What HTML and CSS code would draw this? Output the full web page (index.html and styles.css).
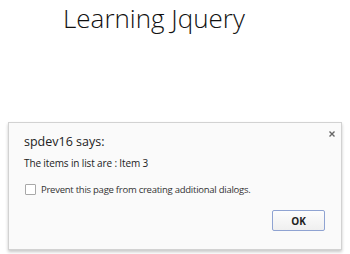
FILE: index.html
```html
<!DOCTYPE html>
<html>
<head>
<meta charset="utf-8">
<link rel="stylesheet" href="styles.css">
</head>
<body>
<h1 class="title">Learning Jquery</h1>
<div class="dialog">
  <svg class="close" width="6" height="6" viewBox="0 0 6 6"><path d="M0.5 0.5L5.5 5.5M5.5 0.5L0.5 5.5" stroke="#666" stroke-width="1.4"/></svg>
  <div class="heading">spdev16 says:</div>
  <div class="message">The items in list are : Item 3</div>
  <label class="prevent"><span class="box"></span>Prevent this page from creating additional dialogs.</label>
  <div class="actions"><button class="ok">OK</button></div>
</div>
</body>
</html>
```
FILE: styles.css
```css
html, body { margin: 0; padding: 0; background: #fff; }
body { width: 350px; height: 254px; overflow: hidden; font-family: "Open Sans", "Liberation Sans", sans-serif; }
.title {
  margin: 0;
  padding: 2px 0 0 63px;
  font-weight: 300;
  font-size: 26px;
  line-height: 32px;
  color: #111;
}
.dialog {
  position: absolute;
  left: 8px; top: 122px;
  width: 334px; height: 128px;
  box-sizing: border-box;
  background: #fafafa;
  border: 1px solid #d2d2d2;
  box-shadow: 0 2px 3px rgba(0,0,0,0.22);
  display: flex; flex-direction: column;
  padding: 0 16px 0 15px;
}
.close { position: absolute; right: 6px; top: 8px; }
.heading { margin-top: 11px; font-size: 12.5px; line-height: 16px; color: #222; }
.message { margin-top: 7px; font-size: 10px; line-height: 12px; letter-spacing: -0.13px; color: #222; }
.prevent { margin-top: 15px; height: 11px; font-size: 9.5px; line-height: 11px; letter-spacing: -0.25px; color: #333; display: flex; align-items: center; }
.box { width: 11px; height: 11px; box-sizing: border-box; border: 1px solid #a8a8a8; background: #fff; margin: 0 5px 0 1px; border-radius: 1px; flex: none; }
.actions { display: flex; justify-content: flex-end; margin-top: 15px; }
.ok {
  width: 53px; height: 21px;
  padding: 0;
  border: 1px solid #8fa3d2;
  background: linear-gradient(#fdfdfd, #efefef);
  font-family: "Open Sans", "Liberation Sans", sans-serif;
  font-weight: bold; font-size: 10px; color: #222;
  border-radius: 2px;
}
```
